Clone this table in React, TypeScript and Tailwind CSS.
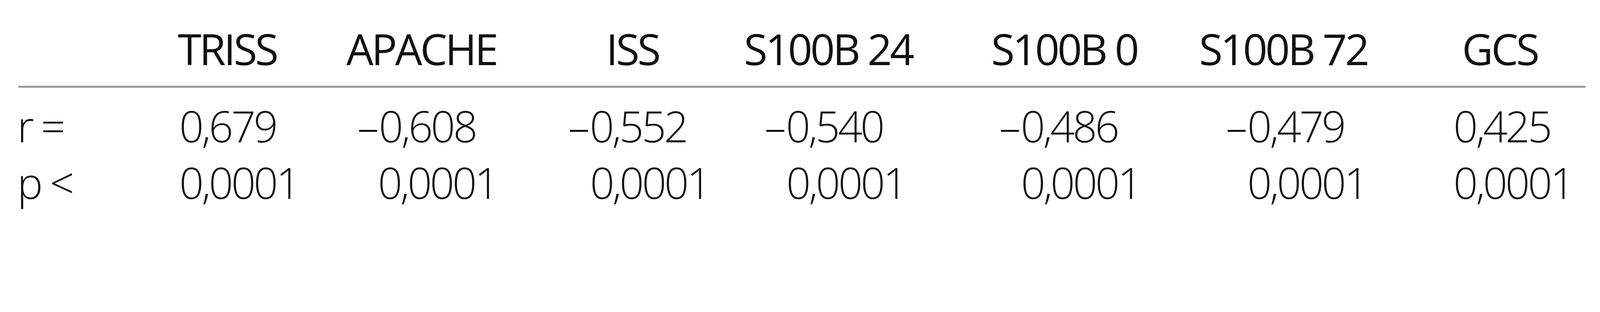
import React from "react";

// the window is 4096px wide, the picture is scaled up to 5372, so sizes here are reference px * 0.7625
const columns = [
    { head: "TRISS", r: "0,679", neg: false, headPad: "pl-0", rPad: "pl-[3.8px]", pPad: "pl-[3.8px]" },
    { head: "APACHE", r: "0,608", neg: true, headPad: "pl-0", rPad: "pl-[28.2px]", pPad: "pl-[80.8px]" },
    { head: "ISS", r: "0,552", neg: true, headPad: "pl-[96.8px]", rPad: "pl-0", pPad: "pl-[55.7px]" },
    { head: "S100B 24", r: "0,540", neg: true, headPad: "pl-0", rPad: "pl-[52.6px]", pPad: "pl-[108.3px]" },
    { head: "S100B 0", r: "0,486", neg: true, headPad: "pl-0", rPad: "pl-[20.6px]", pPad: "pl-[76.2px]" },
    { head: "S100B 72", r: "0,479", neg: true, headPad: "pl-0", rPad: "pl-[68.6px]", pPad: "pl-[123.5px]" },
    { head: "GCS", r: "0,425", neg: false, headPad: "pl-[22.1px]", rPad: "pl-0", pPad: "pl-0" },
];

const grid = "grid grid-cols-[410.97px_431.56px_568.04px_449.86px_632.85px_532.2px_651.15px_337.77px]";

export default function App() {
    return (
        <div className="min-h-screen w-full bg-white text-[#111] font-['Open_Sans',sans-serif] text-[109.8px] leading-[109.8px] tracking-[-5.3px]">
            <div className="ml-[44.2px] w-[4014.4px] pt-[70.15px]">
                {/* Header */}
                <div className={`${grid} font-normal`}>
                    <div></div>
                    {columns.map(c => (
                        <div key={c.head} className={`${c.headPad} whitespace-nowrap`}>{c.head}</div>
                    ))}
                </div>

                <div className="mt-[40.4px] ml-[3px] h-[4.6px] bg-[#9a9a9a]"></div>

                {/* r row */}
                <div className={`${grid} mt-[42.7px] font-light`}>
                    <div className="whitespace-nowrap">r =</div>
                    {columns.map(c => (
                        <div key={c.head} className={`${c.rPad} whitespace-nowrap`}>
                            {c.neg && <span className="tracking-normal">–</span>}
                            {c.r}
                        </div>
                    ))}
                </div>

                {/* p row */}
                <div className={`${grid} mt-[35.1px] font-light`}>
                    <div className="whitespace-nowrap">p &lt;</div>
                    {columns.map(c => (
                        <div key={c.head} className={`${c.pPad} whitespace-nowrap`}>0,0001</div>
                    ))}
                </div>
            </div>
        </div>
    );
}
